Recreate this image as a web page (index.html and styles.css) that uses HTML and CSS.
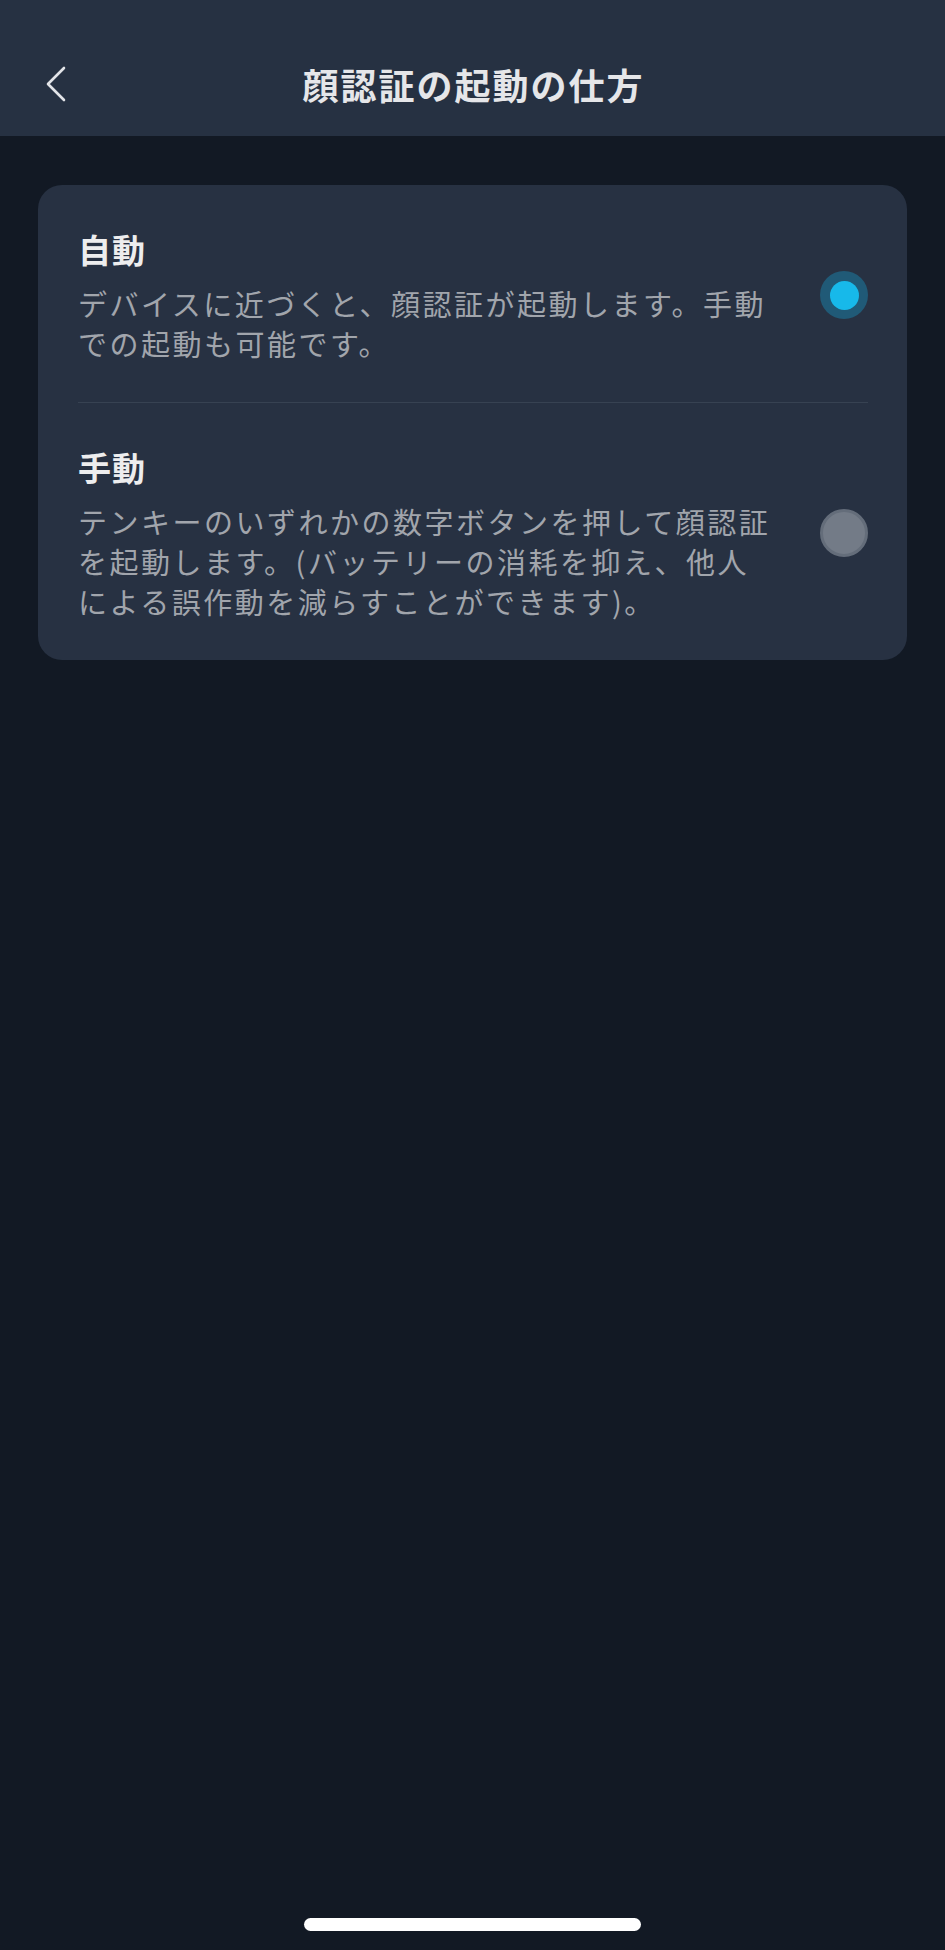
FILE: index.html
```html
<!DOCTYPE html>
<html lang="ja">
<head>
<meta charset="utf-8">
<title>顔認証の起動の仕方</title>
<link rel="stylesheet" href="styles.css">
</head>
<body>
<div class="screen">
  <header class="header">
    <div class="bar">
      <button class="back" aria-label="戻る">
        <svg width="22" height="36" viewBox="0 0 22 36"><polyline points="19,2 3,18 19,34" fill="none" stroke="#e2e4e8" stroke-width="2.6" stroke-linecap="round" stroke-linejoin="round"/></svg>
      </button>
      <h1 class="title">顔認証の起動の仕方</h1>
      <div class="spacer"></div>
    </div>
  </header>

  <main class="content">
    <section class="card">
      <div class="option">
        <div class="option-text">
          <div class="label">自動</div>
          <p class="desc">デバイスに近づくと、顔認証が起動します。手動での起動も可能です。</p>
        </div>
        <span class="radio radio-on"><span class="dot"></span></span>
      </div>
      <div class="option option-sep">
        <div class="option-text">
          <div class="label">手動</div>
          <p class="desc">テンキーのいずれかの数字ボタンを押して顔認証を起動します。(バッテリーの消耗を抑え、他人による誤作動を減らすことができます)。</p>
        </div>
        <span class="radio radio-off"></span>
      </div>
    </section>
  </main>

  <div class="home-bar"><span class="home-indicator"></span></div>
</div>
</body>
</html>
```

FILE: styles.css
```css
html, body {
  margin: 0;
  padding: 0;
  background: #121924;
}

body {
  font-family: "Noto Sans CJK JP", "Noto Sans", sans-serif;
}

.screen {
  min-height: 1950px;
  display: flex;
  flex-direction: column;
  background: #121924;
}

.header {
  background: #263142;
  padding-top: 32px;
}

.bar {
  height: 104px;
  display: grid;
  grid-template-columns: 1fr auto 1fr;
  align-items: center;
}

.back {
  justify-self: start;
  margin-left: 45px;
  padding: 0;
  border: 0;
  background: none;
  display: flex;
  align-items: center;
}

.title {
  margin: 0;
  font-size: 36px;
  font-weight: 700;
  letter-spacing: 2px;
  padding-left: 2px;
  line-height: 48px;
  color: #e5e6e9;
}

.content {
  padding: 49px 38px 0 38px;
}

.card {
  background: #273142;
  border-radius: 24px;
  padding: 0 39px 0 40px;
}

.option {
  display: flex;
  align-items: center;
  gap: 44px;
  padding: 42px 0 39px;
}

.option-sep {
  border-top: 1px solid #374252;
}

.option-text {
  flex: 1;
  min-width: 0;
}

.label {
  font-size: 33px;
  font-weight: 700;
  line-height: 44px;
  letter-spacing: 1px;
  color: #ededee;
}

.desc {
  margin: 12px 0 0;
  font-size: 29px;
  line-height: 40px;
  letter-spacing: 2.5px;
  color: #a1a5ac;
}

.radio {
  flex: none;
  width: 48px;
  height: 48px;
  border-radius: 50%;
  box-sizing: border-box;
  display: flex;
  align-items: center;
  justify-content: center;
}

.radio-on {
  background: #205a77;
}

.radio-on .dot {
  width: 29px;
  height: 29px;
  border-radius: 50%;
  background: #17b9ea;
}

.radio-off {
  background: #737b87;
  border: 3px solid #646d7a;
}

.home-bar {
  margin-top: auto;
  height: 32px;
  display: flex;
  justify-content: center;
}

.home-indicator {
  width: 337px;
  height: 13px;
  border-radius: 7px;
  background: #ffffff;
}
```
